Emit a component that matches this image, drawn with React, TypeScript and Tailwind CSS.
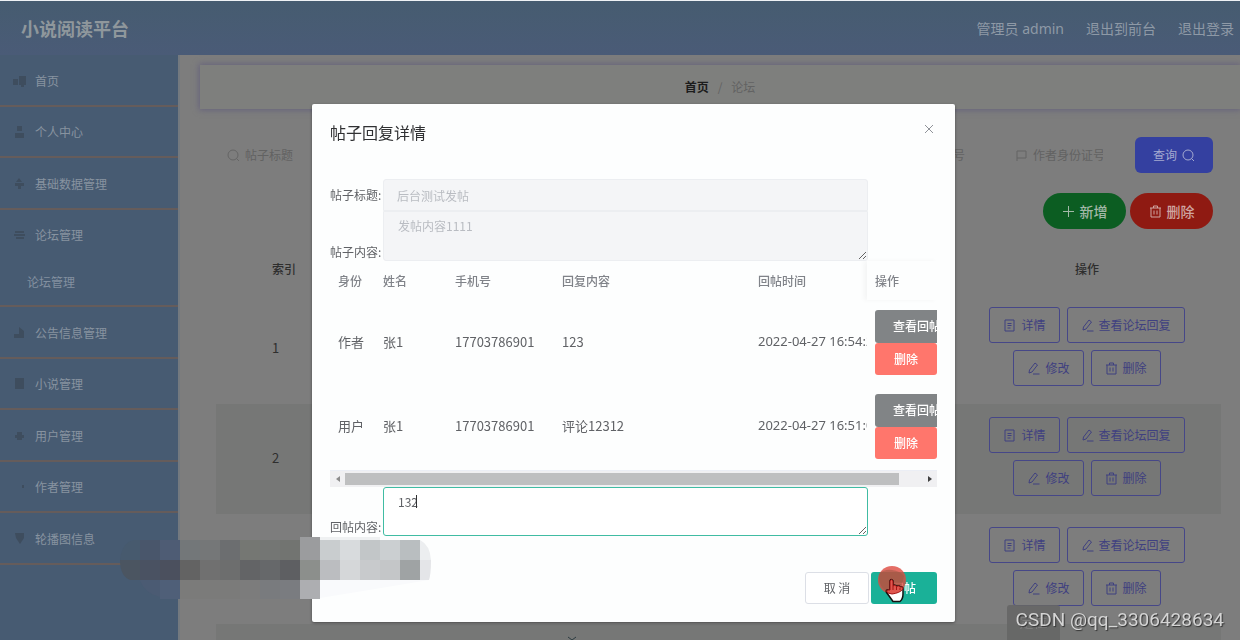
import React from "react";

type MenuEntry = { label: string; icon: string; child?: string };

const menu: MenuEntry[] = [
  { label: "首页", icon: "M0 5h5v6H0zM6 2h7v9H6zM8 11h3v2H8z" },
  { label: "个人中心", icon: "M4 1h5v5H4zM2 8h9v5H2z" },
  { label: "基础数据管理", icon: "M6 1l3 4H3zM2 6h9v3H2zM5 9h3v3H5z" },
  { label: "论坛管理", icon: "M2 3h9v2H2zM1 6h11v2H1zM3 9h8v2H3z", child: "论坛管理" },
  { label: "公告信息管理", icon: "M6 1l5 4v7H1V8h5z" },
  { label: "小说管理", icon: "M2 1h9v11H2z" },
  { label: "用户管理", icon: "M4 3h5v3h2v3H9v2H4V9H2V6h2z" },
  { label: "作者管理", icon: "M9 5h2v3H9z" },
  { label: "轮播图信息", icon: "M2 1h9v5l-4 6-4-6z" },
];

const posts = [1, 2, 3];

const replies = [
  { role: "作者", name: "张1", phone: "17703786901", text: "123", time: "2022-04-27 16:54:22" },
  { role: "用户", name: "张1", phone: "17703786901", text: "评论12312", time: "2022-04-27 16:51:08" },
];

const mosaic: { y: number; h: number; x: number; colors: string[] }[] = [
  {
    x: 140,
    y: 540,
    h: 20,
    colors: ["#49566b", "#4e5c74", "#737779", "#757778", "#6c6e70", "#757773", "#747674", "#727471", "#9b9c9e", "#c9cdcf", "#d8dbdd", "#c2c6c8", "#cbcfd1", "#b9bec0"],
  },
  {
    x: 140,
    y: 560,
    h: 20,
    colors: ["#4a5262", "#4b505e", "#636363", "#707070", "#6d6e6e", "#636466", "#66686a", "#5e5f62", "#8c8f8c", "#bbbdc0", "#d5d7d9", "#c8cacc", "#c4c6c8", "#9fa3a4"],
  },
  {
    x: 160,
    y: 580,
    h: 19,
    colors: ["#4f5f78", "#7b7b7a", "#7b7b7a", "#7b7b7a", "#7c7c7c", "#797b7e", "#7a7c80", "#adaeb1"],
  },
];

type IconProps = { kind: "search" | "plus" | "trash" | "doc" | "edit" | "flag" };

const iconPaths: Record<IconProps["kind"], string> = {
  search: "M6 1a5 5 0 1 0 0 10a5 5 0 1 0 0-10M9.500 9.500l2.500 2.500",
  plus: "M6.5 1v11M1 6.5h11",
  trash: "M1 3h11M4.5 3V1h4v2M2 3v9h9V3M5 5.5v4M8 5.5v4",
  doc: "M2 1h9v11H2zM4.5 4.5h4M4.5 6.5h4M4.5 9h3",
  edit: "M2 11l.5-3L8 1l2.5 2L5 10zM6 12h6.500",
  flag: "M2 12V2h9v7H2",
};

function Icon({ kind }: IconProps) {
  return (
    <svg width="13" height="13" viewBox="0 0 13 13" fill="none" stroke="currentColor" className="shrink-0" aria-hidden="true">
      <path d={iconPaths[kind]} />
    </svg>
  );
}

function Field({ icon, label, className }: { icon: IconProps["kind"]; label: string; className: string }) {
  return (
    <label className={`flex items-center gap-[5px] text-[#656565] ${className}`}>
      <Icon kind={icon} />
      <input
        aria-label={label}
        placeholder={label}
        className="w-full min-w-0 bg-transparent text-[12px] outline-none placeholder:text-[#626262]"
      />
    </label>
  );
}

function OutlineButton({ icon, children }: { icon: IconProps["kind"]; children: React.ReactNode }) {
  return (
    <button
      type="button"
      className="flex h-9 items-center gap-[5px] rounded-[3px] border border-[#464788] px-[13px] text-[12px] text-[#3f4080]"
    >
      <Icon kind={icon} />
      {children}
    </button>
  );
}

function Sidebar() {
  return (
    <nav className="w-[178px] shrink-0 bg-[#475b72]">
      <ul>
        {menu.map((m) => (
          <li key={m.label} className="border-b-2 border-[#655c5b] odd:pt-px">
            <a href="#" className="flex h-[49px] items-center gap-[9px] pl-[13px] text-[12px] text-[#8793a0]">
              <svg width="13" height="13" viewBox="0 0 13 13" aria-hidden="true">
                <path d={m.icon} fill="#3e4d5e" />
              </svg>
              {m.label}
            </a>
            {m.child && (
              <a href="#" className="flex h-[46px] items-center pl-[27px] text-[12px] text-[#8390a0]">
                {m.child}
              </a>
            )}
          </li>
        ))}
      </ul>
    </nav>
  );
}

function PostTable() {
  return (
    <table className="mt-[15px] w-full table-fixed text-[#2e2e2e]">
      <thead>
        <tr className="h-[50px] text-[12px]">
          <th className="pl-[56px] text-left font-medium">索引</th>
          <th className="w-[268px] text-center font-medium">操作</th>
        </tr>
      </thead>
      <tbody>
        {posts.map((n) => (
          <tr key={n} className="h-[110px] bg-[#7d7d7d] even:bg-[#767776]">
            <td className="pb-[3px] pl-[56px] text-[13px]">{n}</td>
            <td className="pb-[5px]">
              <div className="flex flex-wrap justify-center gap-[7px]">
                <OutlineButton icon="doc">详情</OutlineButton>
                <OutlineButton icon="edit">查看论坛回复</OutlineButton>
                <OutlineButton icon="edit">修改</OutlineButton>
                <OutlineButton icon="trash">删除</OutlineButton>
              </div>
            </td>
          </tr>
        ))}
        <tr className="h-[110px] bg-[#767776]">
          <td colSpan={2} className="pl-[351px] pt-3 align-top">
            <svg width="10" height="8" stroke="#2c3c40" fill="none" aria-hidden="true">
              <path d="M1 1l4 3 4-3M5 4v3" />
            </svg>
          </td>
        </tr>
      </tbody>
    </table>
  );
}

function ReplyTable() {
  return (
    <div>
      <table className="w-full table-fixed text-left text-[#606266]">
        <thead>
          <tr className="h-[39px] text-[12px] text-[#808389] [&>th]:pl-2 [&>th]:font-medium">
            <th className="w-[45px]">身份</th>
            <th className="w-[72px]">姓名</th>
            <th className="w-[107px]">手机号</th>
            <th>回复内容</th>
            <th className="w-[117px]">回帖时间</th>
            <th className="w-[70px] shadow-[-3px_0_5px_rgba(0,0,0,0.04)]">操作</th>
          </tr>
        </thead>
        <tbody>
          {replies.map((r) => (
            <tr key={r.time} className="h-[84px] text-[13px] [&>td]:overflow-hidden [&>td]:whitespace-nowrap [&>td]:pl-2">
              <td>{r.role}</td>
              <td>{r.name}</td>
              <td>{r.phone}</td>
              <td>{r.text}</td>
              <td className="font-['Noto_Sans',sans-serif]">{r.time}</td>
              <td className="shadow-[-3px_0_5px_rgba(0,0,0,0.04)]">
                <button type="button" className="block h-[33px] rounded-[3px] bg-[#818486] px-[18px] text-[12px] font-medium text-white">
                  查看回帖
                </button>
                <button type="button" className="block h-8 w-full rounded-[3px] bg-[#ff766c] text-center text-[12px] font-medium text-white">
                  删除
                </button>
              </td>
            </tr>
          ))}
        </tbody>
      </table>
      <div className="mt-[2px] flex h-[17px] items-center justify-between border-t border-[#ebeef5] bg-[#f0f0f2]">
        <span className="flex w-[15px] justify-center">
          <svg width="4" height="8" aria-hidden="true"><path d="M4 1v6L0 4z" fill="#8c8c8c" /></svg>
        </span>
        <span className="flex h-3 flex-1"><span className="w-[96%] bg-[#bebfc0]" /></span>
        <span className="flex w-[15px] justify-center">
          <svg width="4" height="8" aria-hidden="true"><path d="M0 1v6l4-3z" fill="#404040" /></svg>
        </span>
      </div>
    </div>
  );
}

function ReplyDialog() {
  return (
    <div className="fixed inset-0 flex items-start justify-center pl-[27px] pt-[104px]">
      <section
        role="dialog"
        aria-label="帖子回复详情"
        className="w-[643px] rounded-[2px] bg-[#fdfefe] px-[18px] pb-[18px] pt-4 text-[12px] text-[#606266] shadow-[0_1px_3px_rgba(0,0,0,0.4)]"
      >
        <header className="flex items-start justify-between">
          <h2 className="text-[16px] leading-6 text-[#303133]">帖子回复详情</h2>
          <button type="button" aria-label="关闭" className="p-[3px] text-[#909399]">
            <svg width="10" height="10" viewBox="0 0 10 10" stroke="currentColor" className="mt-px" aria-hidden="true">
              <path d="M1 1l8 8M9 1L1 9" />
            </svg>
          </button>
        </header>

        <div className="mt-[35px] flex items-center">
          <label htmlFor="post-title" className="w-[53px] whitespace-nowrap">帖子标题:</label>
          <input
            id="post-title"
            disabled
            value="后台测试发帖"
            className="h-8 w-[485px] rounded-t-[3px] border border-[#eceef1] bg-[#f4f5f7] px-[13px] text-[#b9bcc2]"
          />
        </div>
        <div className="flex items-end">
          <label htmlFor="post-body" className="w-[53px] whitespace-nowrap">帖子内容:</label>
          <textarea
            id="post-body"
            disabled
            value="发帖内容1111"
            className="block h-[50px] w-[485px] rounded-b-[3px] border border-[#eceef1] bg-[#f4f5f7] px-[14px] py-[5px] text-[#b9bcc2]"
          />
        </div>

        <ReplyTable />

        <div className="flex items-end">
          <label htmlFor="reply" className="w-[53px] whitespace-nowrap">回帖内容:</label>
          <div className="relative">
            <textarea
              id="reply"
              defaultValue="132"
              className="block h-[49px] w-[485px] rounded-[3px] border border-[#40bca3] bg-white px-[14px] py-[5px] outline-none"
            />
            <span className="absolute left-[33px] top-2 h-[13px] w-px bg-[#303133]" />
          </div>
        </div>

        <footer className="mt-[36px] flex justify-end gap-[2px]">
          <button type="button" className="h-8 w-16 rounded-[3px] border border-[#dcdfe6] bg-white">取 消</button>
          <button type="button" className="h-8 w-[66px] rounded-[3px] bg-[#1ab198] font-medium text-white">回帖</button>
        </footer>
      </section>
    </div>
  );
}

function Overlays() {
  return (
    <>
      <svg className="pointer-events-none fixed left-0 top-0" width="440" height="640" aria-hidden="true">
        <path d="M140 540h-6q-12 2-14 20h20z" fill="#475a6e" />
        <path d="M120 560q0 16 10 20h10v-20z" fill="#4b5561" />
        <path d="M140 580h20v17q-16-4-20-17z" fill="#4b5b73" />
        <path d="M420 540q10 5 11 20h-11z" fill="#eceef0" />
        <path d="M420 560h11q0 14-2 20h-9z" fill="#e4e5e8" />
        <path d="M320 580h109l-60 10-49 8z" fill="#f9fafc" />
        <rect x="300" y="537" width="20" height="3" fill="#9b9c9e" />
        <rect x="320" y="537" width="60" height="3" fill="#eff1f2" />
        {mosaic.map((row) =>
          row.colors.map((c, i) => (
            <rect key={`${row.y}-${i}`} x={row.x + i * 20} y={row.y} width="20" height={row.h} fill={c} />
          ))
        )}
      </svg>
      <svg className="pointer-events-none fixed left-[876px] top-[564px]" width="32" height="40" aria-hidden="true">
        <circle cx="16" cy="16" r="14" fill="#dd4a40" fillOpacity="0.8" />
        <path d="M3 10q5-5 13-4 8 1 12 6-2 14-12 17Q2 26 3 10z" fill="#9c5a44" fillOpacity="0.55" />
        <path
          d="M14 27V17q1-3 3 0v5q2-2 3.500.5 2-1.500 3.500.5 3-1 3 2v5q0 5-3 7.500h-7q-2-3-6.500-9-1-3 1.500-2.500z"
          fill="#fff"
          stroke="#151010"
          strokeWidth="1.500"
        />
        <path
          d="M14 26V17q1-3 3 0v5q2-2 3.500.5 2-1.500 3.500.5 3-1 3 2-3 4-11 5l-4-1-1-1q-1-2 1-2z"
          fill="#e0564e"
          stroke="#a31212"
        />
        <path d="M17 22v4M20.500 23v3M24 24v2" stroke="#a31212" />
      </svg>
      <div className="fixed bottom-0 left-[1007px] h-[35px] w-[53px] rounded-t-[3px] bg-[#666666]/90 pt-[6px] text-center text-[14px] text-[#7c7c7c]">
        定位
      </div>
      <div className="fixed bottom-[8px] right-[16px] font-['Roboto',sans-serif] text-[19px] leading-6 text-[#d4d4d4] [text-shadow:1px_1px_1px_#333]">
        CSDN @qq_3306428634
      </div>
    </>
  );
}

export default function App() {
  return (
    <div className="flex h-screen flex-col overflow-hidden border-t border-[#eef2f5] bg-[#7d7d7d] font-['Noto_Sans_CJK_SC','Noto_Sans',sans-serif]">
      <header className="flex h-[54px] shrink-0 items-center justify-between bg-linear-to-b from-[#465c70] to-[#4a5b77] pl-[21px] pr-[6px] text-[#8e99a6]">
        <h1 className="text-[18px] font-bold text-[#8f979c]">小说阅读平台</h1>
        <div className="flex gap-[22px] font-['Noto_Sans','Noto_Sans_CJK_SC',sans-serif] text-[14px]">
          <span>管理员 admin</span>
          <a href="#">退出到前台</a>
          <a href="#">退出登录</a>
        </div>
      </header>
      <div className="flex min-h-0 flex-1">
        <Sidebar />
        <main className="min-w-0 flex-1 overflow-hidden border-l-2 border-[#73797f] pl-5 pt-[10px]">
          <div className="flex h-[44px] items-center justify-center gap-[9px] bg-[#7e7f7d] text-[12px] text-[#626262] shadow-[0_0_6px_1px_#65627c]">
            <a href="#" className="font-bold text-[#1c1c1c]">首页</a>
            <span>/</span>
            <span>论坛</span>
          </div>
          <div className="pl-4 pr-[19px] pt-[28px]">
            <div className="flex h-9 items-center justify-end pr-2">
              <Field icon="search" label="帖子标题" className="ml-[11px] mr-auto w-[120px]" />
              <Field icon="flag" label="作者手机号" className="mr-[40px] w-[88px]" />
              <Field icon="flag" label="作者身份证号" className="mr-[32px] w-[88px]" />
              <button type="button" className="flex h-9 w-[78px] items-center justify-center gap-[5px] rounded-[6px] bg-[#3440a0] text-[12px] text-[#a5aad0]">
                查询
                <Icon kind="search" />
              </button>
            </div>
            <div className="mt-5 flex justify-end gap-1 pr-2 text-[14px] font-medium">
              <button type="button" className="flex h-9 w-[83px] items-center justify-center gap-[5px] rounded-full bg-[#0c5d22] text-[#a3b8a8]">
                <Icon kind="plus" />
                新增
              </button>
              <button type="button" className="flex h-9 w-[83px] items-center justify-center gap-[5px] rounded-full bg-[#8f1a12] text-[#cfa6a2]">
                <Icon kind="trash" />
                删除
              </button>
            </div>
            <PostTable />
          </div>
        </main>
      </div>
      <ReplyDialog />
      <Overlays />
    </div>
  );
}
